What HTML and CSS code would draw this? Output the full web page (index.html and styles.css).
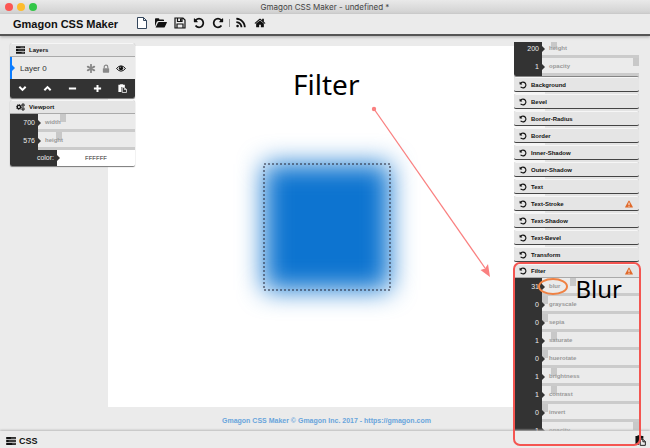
FILE: index.html
```html
<!DOCTYPE html>
<html lang="en">
<head>
<meta charset="utf-8">
<title>Gmagon CSS Maker</title>
<link rel="stylesheet" href="styles.css">
</head>
<body>
<svg class="defs" aria-hidden="true">
  <symbol id="undo" viewBox="0 0 1792 1792"><path d="M1664 896q0 156-61 298t-164 245-245 164-298 61q-172 0-327-72.500t-264-204.500q-7-10-6.500-22.500t8.500-20.500l137-138q10-9 25-9 16 2 23 12 73 95 179 147t225 52q104 0 198.500-40.500t163.500-109.500 109.500-163.500 40.500-198.500-40.500-198.500-109.500-163.500-163.500-109.500-198.500-40.500q-98 0-188 35.500t-160 101.500l137 138q31 30 14 69-17 40-59 40h-448q-26 0-45-19t-19-45v-448q0-42 40-59 39-17 69 14l130 129q107-101 244.500-156.500t284.500-55.500q156 0 298 61t245 164 164 245 61 298z"/></symbol>
  <symbol id="redo" viewBox="0 0 1792 1792"><use href="#undo" width="1792" height="1792" transform="matrix(-1 0 0 1 1792 0)"/></symbol>
  <symbol id="rss" viewBox="0 0 1792 1792"><path d="M576 1344q0 80-56 136t-136 56-136-56-56-136 56-136 136-56 136 56 56 136zm512 123q2 28-17 48-18 21-47 21h-135q-25 0-43-16.500t-20-41.500q-22-229-184.500-391.500t-391.500-184.500q-25-2-41.500-20t-16.500-43v-135q0-29 21-47 17-17 43-17h5q160 13 306 80.500t259 181.500q114 113 181.500 259t80.500 306zm512 2q2 27-18 47-18 20-46 20h-143q-26 0-44.500-17.500t-19.500-42.500q-12-215-101-408.500t-231.500-336-336-231.500-408.500-102q-25-1-42.500-19.500t-17.500-43.500v-143q0-28 20-46 18-18 44-18h3q262 13 501.500 120t425.500 294q187 186 294 425.500t120 501.500z"/></symbol>
  <symbol id="home" viewBox="0 0 1792 1792"><path d="M1472 992v480q0 26-19 45t-45 19h-384v-384h-256v384h-384q-26 0-45-19t-19-45v-480q0-1 .5-3t.5-3l575-474 575 474q1 2 1 6zm223-69l-62 74q-8 9-21 11h-3q-13 0-21-7l-692-577-692 577q-12 8-24 7-13-2-21-11l-62-74q-8-10-7-23.500t11-21.500l719-599q32-26 76-26t76 26l244 204v-195q0-14 9-23t23-9h192q14 0 23 9t9 23v408l219 182q10 8 11 21.500t-7 23.500z"/></symbol>
  <symbol id="file" viewBox="0 0 12 12"><path d="M1.500.5h6l3 3v8h-9zM7.500.5v3h3" fill="#fff" stroke="#34465c"/></symbol>
  <symbol id="folder" viewBox="0 0 12 12"><path d="M0 9.500V2q0-.8.800-.8h2.700q.800 0 .8.800v.4h3.900q.800 0 .8.800V4H3.400q-1 0-1.600.8zM.6 10.600 3 5.600q.3-.7 1.100-.7h7.400q.7 0 .4.700L9.800 9.900q-.3.700-1.100.7z"/></symbol>
  <symbol id="save" viewBox="0 0 12 12"><path d="M1 1h8l2 2v8H1zM3.500 1v3.500h4.500V1M3 11V7h6v4" fill="none" stroke="currentColor" stroke-width="1.200"/><path d="M6 1.500h1.500V4H6z"/></symbol>
  <symbol id="server" viewBox="0 0 12 10"><path d="M0 0h12v2.800H0zM0 3.600h12v2.800H0zM0 7.200h12V10H0z"/><path d="M6 1.400h5M3 5h8M7.500 8.600H11" stroke="#999" stroke-width=".8"/></symbol>
  <symbol id="gears" viewBox="0 0 14 12"><circle cx="4.500" cy="6" r="2.600" fill="none" stroke="currentColor" stroke-width="2"/><circle cx="4.500" cy="6" r="4" fill="none" stroke="currentColor" stroke-width="1.500" stroke-dasharray="1.600 1.540"/><g fill="none" stroke="currentColor"><circle cx="11" cy="3" r="1.500" stroke-width="1.400"/><circle cx="11" cy="9" r="1.500" stroke-width="1.400"/><circle cx="11" cy="3" r="2.500" stroke-dasharray="1.100 .860"/><circle cx="11" cy="9" r="2.500" stroke-dasharray="1.100 .860"/></g></symbol>
  <symbol id="asterisk" viewBox="0 0 10 10"><path d="M5 .8v8.400M1.400 2.900l7.200 4.200M1.400 7.100l7.200-4.200" stroke="currentColor" stroke-width="2" stroke-linecap="round"/></symbol>
  <symbol id="lock" viewBox="0 0 10 10"><path d="M3 5V3.200a2 2 0 0 1 4 0V5" fill="none" stroke="currentColor" stroke-width="1.300"/><rect x="1.500" y="4.600" width="7" height="5" rx=".6"/></symbol>
  <symbol id="eye" viewBox="0 0 12 10"><path d="M.6 5Q6-1.400 11.400 5 6 11.400.6 5z" fill="none" stroke="currentColor" stroke-width="1.200"/><circle cx="6" cy="4.600" r="2.500"/><path d="M4.800 4.500Q4.900 3.500 6 3.300" fill="none" stroke="#fff" stroke-width=".6"/></symbol>
  <symbol id="down" viewBox="0 0 10 10"><path d="M1.500 3 5 6.500 8.500 3" fill="none" stroke="currentColor" stroke-width="2.200"/></symbol>
  <symbol id="up" viewBox="0 0 10 10"><path d="M1.500 7 5 3.500 8.500 7" fill="none" stroke="currentColor" stroke-width="2.200"/></symbol>
  <symbol id="minus" viewBox="0 0 10 10"><path d="M1 5h8" stroke="currentColor" stroke-width="2.200"/></symbol>
  <symbol id="plus" viewBox="0 0 10 10"><path d="M1 5h8M5 1v8" stroke="currentColor" stroke-width="2.200"/></symbol>
  <symbol id="paste" viewBox="0 0 12 12"><path d="M.5 1h2.300V.2h4V1h2.300v3H4.500v6.500h-4z"/><path d="M5.700 4.700h3.100l2.500 2.500v4.100H5.700zM8.600 4.700v2.700h2.700" fill="var(--paper)" stroke="currentColor"/></symbol>
  <symbol id="warn" viewBox="0 0 10 10"><path d="M5 .6q.4 0 .7.500l4.100 7.500q.4.900-.6.900H.8q-1 0-.6-.9L4.300 1.100Q4.600.6 5 .6z" fill="#e0692a"/><path d="M5 3.300v3M5 7.200v1.200" stroke="#fff" stroke-width="1.200"/></symbol>
</svg>

<header class="titlebar">
  <div class="lights"><i class="light red"></i><i class="light yellow"></i><i class="light green"></i></div>
  <span class="window-title">Gmagon CSS Maker - undefined *</span>
</header>

<nav class="toolbar">
  <h1 class="brand">Gmagon CSS Maker</h1>
  <div class="tools">
    <button class="tool" aria-label="New"><svg><use href="#file"/></svg></button>
    <button class="tool" aria-label="Open"><svg><use href="#folder"/></svg></button>
    <button class="tool" aria-label="Save"><svg><use href="#save"/></svg></button>
    <button class="tool" aria-label="Undo"><svg><use href="#undo"/></svg></button>
    <button class="tool" aria-label="Redo"><svg><use href="#redo"/></svg></button>
    <span class="divider"></span>
    <button class="tool" aria-label="Feed"><svg><use href="#rss"/></svg></button>
    <button class="tool" aria-label="Home"><svg><use href="#home"/></svg></button>
  </div>
</nav>

<main class="workspace">
  <section class="stage">
    <div class="canvas">
      <div class="shape"><svg class="selection"><rect x="0" y="0" width="100%" height="100%"/></svg></div>
    </div>
    <a class="credit" href="#">Gmagon CSS Maker © Gmagon Inc. 2017 - https://gmagon.com</a>
  </section>

  <aside class="panel left">
    <section class="group">
      <h2 class="head open"><svg class="icon"><use href="#server"/></svg>Layers</h2>
      <div class="layer">
        <span class="layer-name">Layer 0</span>
        <button class="mini" aria-label="Effects"><svg><use href="#asterisk"/></svg></button>
        <button class="mini" aria-label="Lock"><svg><use href="#lock"/></svg></button>
        <button class="mini on" aria-label="Visible"><svg><use href="#eye"/></svg></button>
      </div>
      <div class="actions">
        <button aria-label="Move down"><svg><use href="#down"/></svg></button>
        <button aria-label="Move up"><svg><use href="#up"/></svg></button>
        <button aria-label="Remove"><svg><use href="#minus"/></svg></button>
        <button aria-label="Add"><svg><use href="#plus"/></svg></button>
        <button aria-label="Paste"><svg><use href="#paste"/></svg></button>
      </div>
    </section>
    <section class="group">
      <h2 class="head open"><svg class="icon"><use href="#gears"/></svg>Viewport</h2>
      <div class="row"><span class="value">700</span><label for="vw">width</label><input id="vw" type="range" value="24"></div>
      <div class="row"><span class="value">576</span><label for="vh">height</label><input id="vh" type="range" value="20"></div>
      <div class="color"><label class="value" for="vc">color:</label><input id="vc" type="text" value="FFFFFF"></div>
    </section>
  </aside>

  <aside class="panel right">
    <section class="group clipped">
      <div class="row"><span class="value">200</span><label for="sh">height</label><input id="sh" type="range" value="10"></div>
      <div class="row"><span class="value">1</span><label for="so">opacity</label><input id="so" type="range" value="100"></div>
    </section>
    <button class="head"><svg class="icon"><use href="#undo"/></svg>Background</button>
    <button class="head"><svg class="icon"><use href="#undo"/></svg>Bevel</button>
    <button class="head"><svg class="icon"><use href="#undo"/></svg>Border-Radius</button>
    <button class="head"><svg class="icon"><use href="#undo"/></svg>Border</button>
    <button class="head"><svg class="icon"><use href="#undo"/></svg>Inner-Shadow</button>
    <button class="head"><svg class="icon"><use href="#undo"/></svg>Outer-Shadow</button>
    <button class="head"><svg class="icon"><use href="#undo"/></svg>Text</button>
    <button class="head"><svg class="icon"><use href="#undo"/></svg>Text-Stroke<svg class="warn"><use href="#warn"/></svg></button>
    <button class="head"><svg class="icon"><use href="#undo"/></svg>Text-Shadow</button>
    <button class="head"><svg class="icon"><use href="#undo"/></svg>Text-Bevel</button>
    <button class="head"><svg class="icon"><use href="#undo"/></svg>Transform</button>
    <section class="group">
      <button class="head open"><svg class="icon"><use href="#undo"/></svg>Filter<svg class="warn"><use href="#warn"/></svg></button>
      <div class="row"><span class="value">31</span><label for="f1">blur</label><input id="f1" type="range" value="31"></div>
      <div class="row"><span class="value">0</span><label for="f2">grayscale</label><input id="f2" type="range" value="0"></div>
      <div class="row"><span class="value">0</span><label for="f3">sepia</label><input id="f3" type="range" value="0"></div>
      <div class="row"><span class="value">1</span><label for="f4">saturate</label><input id="f4" type="range" value="10"></div>
      <div class="row"><span class="value">0</span><label for="f5">huerotate</label><input id="f5" type="range" value="0"></div>
      <div class="row"><span class="value">1</span><label for="f6">brightness</label><input id="f6" type="range" value="10"></div>
      <div class="row"><span class="value">1</span><label for="f7">contrast</label><input id="f7" type="range" value="10"></div>
      <div class="row"><span class="value">0</span><label for="f8">invert</label><input id="f8" type="range" value="0"></div>
      <div class="row"><span class="value">1</span><label for="f9">opacity</label><input id="f9" type="range" value="100"></div>
    </section>
  </aside>
</main>

<footer class="statusbar">
  <button class="css-toggle"><svg><use href="#server"/></svg>CSS</button>
  <button class="copy" aria-label="Copy CSS"><svg><use href="#paste"/></svg></button>
</footer>

<div class="notes">
  <span class="note note-filter">Filter</span>
  <svg class="arrow" viewBox="0 0 122 174"><circle cx="4" cy="4" r="2.200"/><path d="M4 4 115 163" fill="none" stroke="#fa8080" stroke-width="1.300"/><path d="M120 172 110.500 165l4.500-1.500 3-4.500z"/></svg>
  <span class="ring"></span>
  <span class="note note-blur">Blur</span>
  <span class="frame"></span>
</div>
</body>
</html>
```
FILE: styles.css
```css
* { box-sizing: border-box; }

body {
  --paper: #333;
  margin: 0;
  height: 100vh;
  display: flex;
  flex-direction: column;
  position: relative;
  overflow: hidden;
  background: #ebebeb;
  color: #111;
  font-family: "Liberation Sans", Arial, sans-serif;
}

button {
  border: 0;
  padding: 0;
  background: none;
  color: inherit;
  font: inherit;
}

svg { display: block; fill: currentColor; }
.defs { position: absolute; width: 0; height: 0; }

.titlebar {
  flex: none;
  height: 14px;
  display: grid;
  grid-template-columns: 1fr auto 1fr;
  align-items: center;
  padding: 0 5px;
  background: linear-gradient(#e9e9e9, #d0d0d0);
}
.lights { display: flex; gap: 4px; }
.light { width: 8px; height: 8px; border-radius: 50%; }
.red { background: #fc5753; }
.yellow { background: #fdbc2e; }
.green { background: #33c748; }
.window-title {
  color: #444;
  font: 8px/14px Inter, "Liberation Sans", sans-serif;
}

.toolbar {
  flex: none;
  height: 22px;
  display: flex;
  align-items: center;
  gap: 18px;
  padding-left: 13px;
  border-bottom: 2px solid #555;
  box-shadow: 0 1px 3px #aaa;
}
.brand { margin: 0; font-size: 11px; line-height: 20px; }
.tools { display: flex; align-items: center; gap: 7px; padding-bottom: 3px; }
.tool svg { width: 12px; height: 12px; }
.divider { width: 1px; height: 8px; margin: 0 -2px; background: #999; }

.workspace {
  flex: 1;
  min-height: 0;
  display: grid;
  grid-template-columns: 1fr;
  grid-template-rows: minmax(0, 1fr);
  overflow: hidden;
}
.stage, .panel { grid-area: 1 / 1; }
.stage {
  display: flex;
  flex-direction: column;
  margin: 10px 105px 0 108px;
}
.canvas {
  flex: 1;
  display: grid;
  place-items: center;
  background: #fff;
}
.shape {
  width: 126px;
  height: 126px;
  position: relative;
}
.shape::before {
  content: "";
  position: absolute;
  inset: 0;
  background: #0d74d0;
  filter: blur(13px);
}
.selection {
  position: relative;
  width: 100%;
  height: 100%;
  overflow: visible;
  fill: none;
  stroke: #223;
  stroke-dasharray: 2 2;
}
.credit {
  padding: 10px 0 6px;
  color: #69a5dc;
  font-size: 7px;
  font-weight: bold;
  line-height: 8px;
  text-align: center;
  text-decoration: none;
}

.panel { width: 125px; display: flex; flex-direction: column; gap: 2px; }
.left { justify-self: start; margin: 7px 0 0 10px; }
.right { justify-self: end; margin: 6px 11px 0 0; overflow: hidden; }
.group {
  flex: none;
  overflow: hidden;
  border-radius: 2px;
  box-shadow: 0 1px 1px #777;
}
.clipped { margin: -2px 0 -1px; }

.head {
  flex: none;
  display: flex;
  align-items: center;
  width: 100%;
  height: 15px;
  margin: 0;
  padding: 0 6px 0 5px;
  gap: 4px;
  border-top: 1px solid #f6f6f6;
  border-bottom: 1px solid #444;
  border-radius: 2px;
  background: #e5e5e5;
  box-shadow: 0 0 1px #999;
  font-size: 6px;
  font-weight: bold;
  line-height: 8px;
}
.open { height: 14px; border-bottom-color: #aaa; border-radius: 2px 2px 0 0; }
.icon { width: 8px; height: 8px; }
.left .icon { width: 9px; }
.left .head { padding-left: 6px; }
.warn { width: 8px; height: 8px; margin-left: auto; }

.layer {
  position: relative;
  display: flex;
  align-items: center;
  gap: 5px;
  height: 22px;
  padding: 0 9px 0 8px;
  border-left: 2px solid #0a7cff;
  background: #ebebeb;
  font-size: 8px;
}
.layer::before, .value::after {
  content: "";
  position: absolute;
  left: 0;
  top: 50%;
  border: 3px solid transparent;
  border-right-width: 0;
  border-left-color: #0a7cff;
  transform: translateY(-50%);
}
.layer-name { flex: 1; color: #333; }
.mini { color: #888; }
.mini svg { width: 10px; height: 9px; }
.on { color: #111; }

.actions {
  display: grid;
  grid-template-columns: repeat(5, 1fr);
  align-items: center;
  justify-items: center;
  height: 19px;
  background: #333;
  color: #fff;
}
.actions svg { width: 9px; height: 9px; }

.row {
  display: grid;
  grid-template-columns: 28px 1fr;
  height: 18px;
  background: #ebebeb;
}
.value {
  position: relative;
  padding-right: 3px;
  background: #333;
  color: #eee;
  font-size: 7px;
  line-height: 18px;
  text-align: right;
}
.value::after { left: 100%; border-left-color: #333; }
.row label, .row input { grid-area: 1 / 2; }
.row label {
  z-index: 1;
  padding-left: 7px;
  color: #999;
  font-size: 6px;
  font-weight: bold;
  line-height: 17px;
  pointer-events: none;
}
.row input {
  appearance: none;
  width: 100%;
  min-width: 0;
  height: 18px;
  margin: 0;
  border-bottom: 3px solid #cbcbcb;
  background: #ebebeb;
}
.row input::-webkit-slider-runnable-track {
  display: flex;
  align-items: flex-end;
  height: 15px;
}
.row input::-webkit-slider-thumb {
  appearance: none;
  width: 6px;
  height: 8px;
  background: #c8c8c8;
}

.color { display: grid; grid-template-columns: 47px 1fr; height: 16px; }
.color .value { line-height: 16px; }
.color input {
  min-width: 0;
  border: 0;
  padding: 0;
  background: #fff;
  color: #333;
  font: 6px/16px "Liberation Sans", Arial, sans-serif;
  text-align: center;
}

.statusbar {
  flex: none;
  display: flex;
  align-items: center;
  justify-content: space-between;
  height: 17px;
  padding: 2px 4px 0 6px;
  background: #ebebeb;
  box-shadow: 0 -1px 2px #bbb;
  z-index: 1;
}
.css-toggle {
  display: flex;
  align-items: center;
  gap: 3px;
  font-size: 9px;
  font-weight: bold;
  line-height: 12px;
}
.css-toggle svg { width: 10px; height: 8px; }
.copy { --paper: #ebebeb; }
.copy svg { width: 11px; height: 11px; }

.notes { position: absolute; inset: 0; z-index: 2; pointer-events: none; }
.note {
  position: absolute;
  color: #000;
  font-family: "Comic Sans MS", "Noto Sans", sans-serif;
  line-height: 32px;
}
.note-filter { left: 293px; top: 68px; font-size: 28px; }
.note-blur { right: 28px; top: 273px; font-size: 24px; }
.arrow { position: absolute; left: 370px; top: 105px; width: 122px; height: 174px; fill: #fa8080; }
.ring {
  position: absolute;
  right: 82px;
  top: 278px;
  width: 30px;
  height: 17px;
  border: 2px solid #ef8244;
  border-radius: 50%;
}
.frame {
  position: absolute;
  right: 9px;
  top: 262px;
  bottom: 2px;
  width: 128px;
  border: 2px solid #f45551;
  border-radius: 7px;
}
```
